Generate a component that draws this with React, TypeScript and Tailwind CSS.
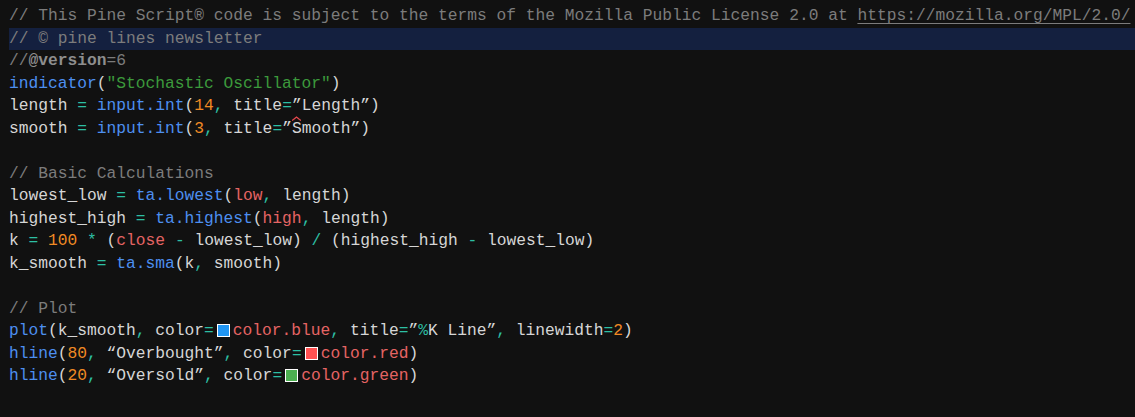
import React from "react";

const C = {
  cmt: "text-[#7c7c7c]",
  txt: "text-[#d6d6d6]",
  fn: "text-[#4d8ff0]",
  str: "text-[#3c9a3c]",
  num: "text-[#f08a24]",
  op: "text-[#2dbfa3]",
  bi: "text-[#e56464]",
};

function Swatch({ color }: { color: string }) {
  return (
    <span
      className={`mx-[3px] inline-block h-[13px] w-[13px] translate-y-[1px] border border-white align-[-1px] ${color}`}
    />
  );
}

function Line({ children, hl }: { children?: React.ReactNode; hl?: boolean }) {
  return (
    <div className={`h-[22.5px] whitespace-pre ${hl ? "bg-[#14203f]" : ""}`}>
      {children}
    </div>
  );
}

export default function App() {
  return (
    <div className="h-[417px] w-[1135px] overflow-hidden bg-[#111111] pl-[9px] pt-[5px] font-['Liberation_Mono',monospace] text-[16.25px] leading-[22.5px] text-[#d6d6d6]">
      <Line>
        <span className={C.cmt}>
          // This Pine Script® code is subject to the terms of the Mozilla Public License 2.0 at{" "}
          <span className="underline underline-offset-[3px]">https://mozilla.org/MPL/2.0/</span>
        </span>
      </Line>
      <Line hl>
        <span className={C.cmt}>// © pine lines newsletter</span>
      </Line>
      <Line>
        <span className={C.cmt}>//</span>
        <span className="font-bold text-[#8e8e8e]">@version</span>
        <span className={C.cmt}>=6</span>
      </Line>
      <Line>
        <span className={C.fn}>indicator</span>(<span className={C.str}>"Stochastic Oscillator"</span>)
      </Line>
      <Line>
        length <span className={C.op}>=</span> <span className={C.fn}>input.int</span>(
        <span className={C.num}>14</span>
        <span className={C.op}>,</span> title<span className={C.op}>=</span>”Length”)
      </Line>
      <Line>
        smooth <span className={C.op}>=</span> <span className={C.fn}>input.int</span>(
        <span className={C.num}>3</span>
        <span className={C.op}>,</span> title<span className={C.op}>=</span>”
        <span className="relative">
          <svg className="absolute left-0 top-[-3px]" width="9" height="5" viewBox="0 0 9 5">
            <path d="M0 4.5 L1.5 3.5 L4.5 1 L7.5 3.5 L9 4.5" fill="none" stroke="#e5484d" strokeWidth="1.3" />
          </svg>
          Smooth
        </span>
        ”)
      </Line>
      <Line />
      <Line>
        <span className={C.cmt}>// Basic Calculations</span>
      </Line>
      <Line>
        lowest_low <span className={C.op}>=</span> <span className={C.fn}>ta.lowest</span>(
        <span className={C.bi}>low</span>
        <span className={C.op}>,</span> length)
      </Line>
      <Line>
        highest_high <span className={C.op}>=</span> <span className={C.fn}>ta.highest</span>(
        <span className={C.bi}>high</span>
        <span className={C.op}>,</span> length)
      </Line>
      <Line>
        k <span className={C.op}>=</span> <span className={C.num}>100</span> <span className={C.op}>*</span> (
        <span className={C.bi}>close</span> <span className={C.op}>-</span> lowest_low) <span className={C.op}>/</span>{" "}
        (highest_high <span className={C.op}>-</span> lowest_low)
      </Line>
      <Line>
        k_smooth <span className={C.op}>=</span> <span className={C.fn}>ta.sma</span>(k<span className={C.op}>,</span> smooth)
      </Line>
      <Line />
      <Line>
        <span className={C.cmt}>// Plot</span>
      </Line>
      <Line>
        <span className={C.fn}>plot</span>(k_smooth<span className={C.op}>,</span> color<span className={C.op}>=</span>
        <Swatch color="bg-[#2196f3]" />
        <span className={C.bi}>color.blue</span>
        <span className={C.op}>,</span> title<span className={C.op}>=</span>”<span className={C.op}>%</span>K Line”
        <span className={C.op}>,</span> linewidth<span className={C.op}>=</span>
        <span className={C.num}>2</span>)
      </Line>
      <Line>
        <span className={C.fn}>hline</span>(<span className={C.num}>80</span>
        <span className={C.op}>,</span> “Overbought”<span className={C.op}>,</span> color<span className={C.op}>=</span>
        <Swatch color="bg-[#ff5252]" />
        <span className={C.bi}>color.red</span>)
      </Line>
      <Line>
        <span className={C.fn}>hline</span>(<span className={C.num}>20</span>
        <span className={C.op}>,</span> “Oversold”<span className={C.op}>,</span> color<span className={C.op}>=</span>
        <Swatch color="bg-[#4caf50]" />
        <span className={C.bi}>color.green</span>)
      </Line>
    </div>
  );
}
